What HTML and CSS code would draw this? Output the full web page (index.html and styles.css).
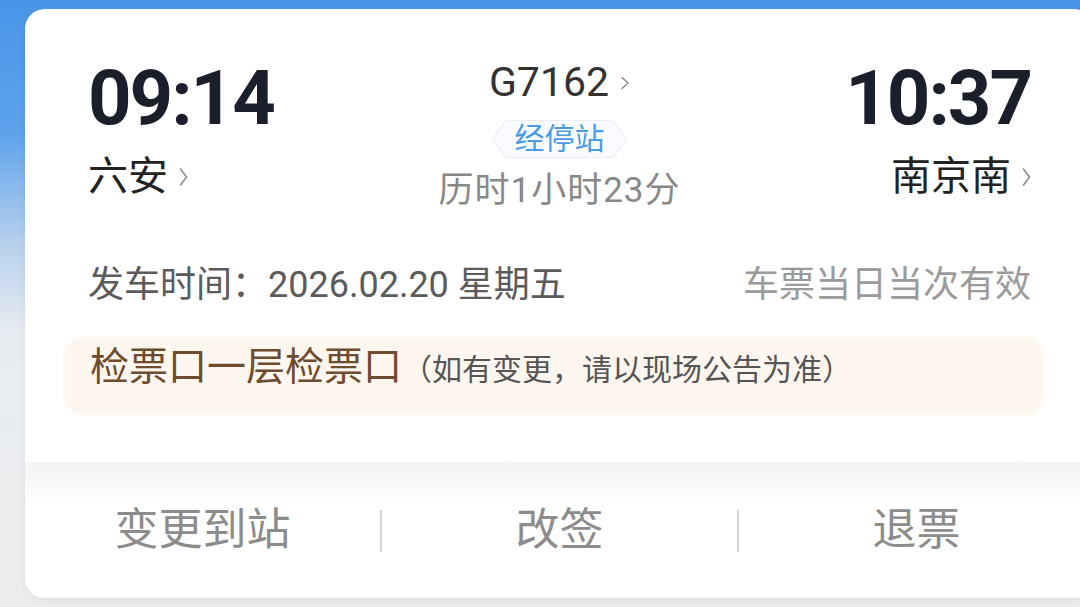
FILE: index.html
```html
<!DOCTYPE html>
<html lang="zh-CN">
<head>
    <meta charset="UTF-8">
    <meta name="viewport" content="width=device-width, initial-scale=1.0">
    <title>行程详情</title>
    <link rel="stylesheet" href="styles.css">
</head>
<body>
    <div class="card">
        <div class="trip">
            <div class="stop stop-from">
                <div class="time">09:14</div>
                <div class="station">六安
                    <svg class="chev" width="9" height="20" viewBox="0 0 9 20"><polyline points="1.5,2 7.5,10 1.5,18" /></svg>
                </div>
            </div>
            <div class="train">
                <div class="train-no">G7162
                    <svg class="chev chev-sm" width="10" height="14" viewBox="0 0 10 14"><polyline points="2,1.5 8,7 2,12.5" /></svg>
                </div>
                <div class="badge">
                    <svg class="badge-bg" width="135" height="38" viewBox="0 0 135 38">
                        <polygon points="14,0.5 121,0.5 134.5,19 121,37.5 14,37.5 0.5,19" />
                    </svg>
                    <span class="badge-text">经停站</span>
                </div>
                <div class="duration">历时1小时23分</div>
            </div>
            <div class="stop stop-to">
                <div class="time">10:37</div>
                <div class="station">南京南
                    <svg class="chev" width="9" height="20" viewBox="0 0 9 20"><polyline points="1.5,2 7.5,10 1.5,18" /></svg>
                </div>
            </div>
        </div>

        <div class="date-row">
            <span class="date">发车时间：2026.02.20 星期五</span>
            <span class="valid">车票当日当次有效</span>
        </div>

        <div class="gate">
            <span class="gate-name">检票口一层检票口</span>
            <span class="gate-note">（如有变更，请以现场公告为准）</span>
        </div>

        <div class="actions">
            <div class="action">变更到站</div>
            <div class="sep"></div>
            <div class="action">改签</div>
            <div class="sep"></div>
            <div class="action">退票</div>
        </div>
    </div>
</body>
</html>
```

FILE: styles.css
```css
html, body {
    margin: 0;
    height: 607px;
    overflow: hidden;
}
body {
    font-family: Roboto, "Noto Sans CJK SC", sans-serif;
    background: linear-gradient(180deg, #4a95e9 0%, #5ea2ec 22%, #b7d0ee 40%, #e8ecf1 55%, #ececec 100%);
    padding-top: 9px;
    box-sizing: border-box;
}
.card {
    margin-left: 25px;
    width: 1069px;
    height: 589px;
    background-color: #fff;
    border-radius: 20px;
    box-shadow: 0 2px 8px rgba(0,0,0,0.06);
    overflow: hidden;
    display: flex;
    flex-direction: column;
}

/* top: times + train */
.trip {
    display: grid;
    grid-template-columns: 1fr auto 1fr;
    align-items: start;
    padding: 51px 63px 0 63px;
}
.stop {
    display: flex;
    flex-direction: column;
}
.stop-to {
    align-items: flex-end;
}
.time {
    font-size: 76px;
    line-height: 76px;
    font-weight: 700;
    letter-spacing: -2px;
    color: #1b1f2b;
}
.station {
    margin-top: 17px;
    display: flex;
    align-items: center;
    gap: 11px;
    font-size: 40px;
    line-height: 48px;
    color: #222;
}
.chev polyline {
    fill: none;
    stroke: #8e8e8e;
    stroke-width: 1.6;
    stroke-linecap: round;
    stroke-linejoin: round;
}
.train {
    display: flex;
    flex-direction: column;
    align-items: center;
}
.train-no {
    display: flex;
    align-items: center;
    gap: 11px;
    font-size: 41px;
    line-height: 44px;
    color: #333;
}
.chev-sm {
    margin-top: 2px;
}
.badge {
    position: relative;
    margin-top: 16px;
    width: 135px;
    height: 38px;
    display: flex;
    align-items: center;
    justify-content: center;
}
.badge-bg {
    position: absolute;
    left: 0;
    top: 0;
}
.badge-bg polygon {
    fill: #f9fbfe;
    stroke: #e9eef4;
    stroke-width: 1.2;
}
.badge-text {
    position: relative;
    font-size: 30px;
    line-height: 38px;
    color: #4a9de2;
}
.duration {
    margin-top: 12px;
    font-size: 35px;
    line-height: 42px;
    color: #888;
    letter-spacing: 1px;
}

/* date */
.date-row {
    display: flex;
    justify-content: space-between;
    margin-top: 51px;
    padding: 0 63px;
    font-size: 36px;
    line-height: 44px;
}
.date {
    color: #5b5b5b;
}
.valid {
    color: #9a9a9a;
}

/* gate notice */
.gate {
    margin: 32px 51px 0 40px;
    height: 74px;
    box-sizing: border-box;
    padding: 5px 0 0 25px;
    background-color: #fdf6ef;
    border-radius: 16px;
    box-shadow: 0 0 6px #fdf6ef;
    display: flex;
    align-items: baseline;
    line-height: 46px;
}
.gate-name {
    font-size: 39px;
    color: #6e4c2e;
}
.gate-note {
    font-size: 30px;
    color: #555;
}

/* actions */
.actions {
    margin-top: 49px;
    flex: 1;
    display: flex;
    align-items: flex-start;
    padding-top: 42px;
    background: linear-gradient(180deg, #f3f3f3 0, #fafafa 24px, #fff 44px);
}
.action {
    flex: 1;
    text-align: center;
    font-size: 44px;
    line-height: 52px;
    color: #8c8c8c;
}
.sep {
    width: 2px;
    height: 42px;
    margin-top: 6px;
    background-color: #d4d4d4;
}
```
